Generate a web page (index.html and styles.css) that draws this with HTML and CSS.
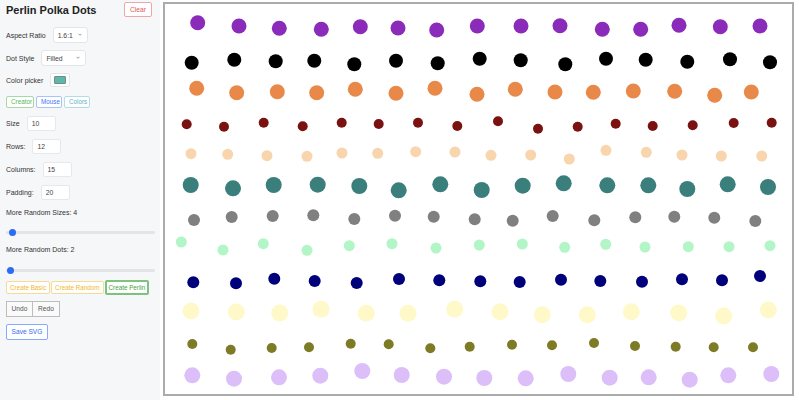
FILE: index.html
```html
<!DOCTYPE html>
<html>

<head>
    <title>Perlin Polka Dots</title>
    <meta charset="UTF-8" />
    <link rel="stylesheet" href="styles.css">
</head>

<body>
    <aside class="panel">
        <header class="panel-head">
            <h1>Perlin Polka Dots</h1>
            <button class="btn btn-red">Clear</button>
        </header>

        <div class="field field-aspect">
            <label for="aspect">Aspect Ratio</label>
            <span class="select select-short">
                <select id="aspect">
                    <option>1.6:1</option>
                    <option>1:1</option>
                </select>
                <svg class="chev" viewBox="0 0 8 5"><path d="M1 1l3 3 3-3" fill="none" stroke="#555" stroke-width="1.2" /></svg>
            </span>
        </div>

        <div class="field field-style">
            <label for="dot_style">Dot Style</label>
            <span class="select select-long">
                <select id="dot_style">
                    <option>Filled</option>
                    <option>Outline</option>
                </select>
                <svg class="chev" viewBox="0 0 8 5"><path d="M1 1l3 3 3-3" fill="none" stroke="#555" stroke-width="1.2" /></svg>
            </span>
        </div>

        <div class="field field-color">
            <label for="color">Color picker</label>
            <span class="swatch"><span class="swatch-fill"></span></span>
        </div>

        <div class="tabs">
            <button class="btn btn-green">Creator</button>
            <button class="btn btn-blue">Mouse</button>
            <button class="btn btn-cyan">Colors</button>
        </div>

        <div class="field field-num">
            <label for="size">Size</label>
            <input type="text" id="size" value="10" />
        </div>
        <div class="field field-num">
            <label for="rows">Rows:</label>
            <input type="text" id="rows" value="12" />
        </div>
        <div class="field field-num">
            <label for="columns">Columns:</label>
            <input type="text" id="columns" value="15" />
        </div>
        <div class="field field-num">
            <label for="padding">Padding:</label>
            <input type="text" id="padding" value="20" />
        </div>

        <div class="range-label range-label-first">More Random Sizes: 4</div>
        <input class="range range-sizes" type="range" min="0" max="200" value="4" />
        <div class="range-label">More Random Dots: 2</div>
        <input class="range range-dots" type="range" min="1" max="150" value="2" />

        <div class="actions">
            <button class="btn btn-yellow">Create Basic</button>
            <button class="btn btn-yellow">Create Random</button>
            <button class="btn btn-perlin">Create Perlin</button>
        </div>

        <div class="history">
            <button class="btn btn-gray">Undo</button>
            <button class="btn btn-gray">Redo</button>
        </div>

        <button class="btn btn-save">Save SVG</button>
    </aside>

    <main class="stage">
        <div class="canvas">
            <svg id="dots" viewBox="165 4 627 390" width="627" height="390"></svg>
        </div>
    </main>

    <script>
        const rows = [
            { fill: "#8a2cb9", r: 7.5, pts: [[197.7,22.7],[239,26],[279.3,28.3],[321.3,29.3],[360.3,26.7],[398,28],[436.7,30],[477.3,26],[521,26],[560,25.7],[602.3,29.3],[640.7,29.3],[679,25.3],[720.3,26.7],[760,26]] },
            { fill: "#000000", r: 7, pts: [[191.7,62.7],[234.3,59.7],[275.7,61.3],[314.3,60.7],[354.3,64.3],[396,60.7],[437.7,63.3],[479.7,58.7],[520.7,60.3],[565.3,64.3],[606,58.7],[645.7,59.7],[687.3,61.7],[730,59.3],[770,62.3]] },
            { fill: "#e8894a", r: 7.5, pts: [[196.7,88.3],[236.7,92.7],[277.3,91.7],[316.7,92.7],[355.3,89.3],[396,93.3],[435,88.3],[477,94.3],[515.3,89.3],[555,92],[593.3,92.3],[633.3,91],[674.7,91.3],[714.7,95.3],[751.3,92]] },
            { fill: "#7b1212", r: 5, pts: [[186.7,124.3],[224,126.7],[263.7,122.7],[302.7,126.3],[341.7,122.7],[378.7,124],[418,122.7],[457.3,126],[498,121.3],[538,128.7],[577.7,126.7],[615.7,123.7],[652.7,126],[692.7,125.3],[733.7,123],[771.7,122.7]] },
            { fill: "#f8d5ad", r: 5.5, pts: [[191,153.7],[227.7,154.3],[267,155.7],[307,156.3],[342,153],[377.7,153.3],[415.7,151.7],[455,152],[491,155.3],[530.7,155],[569.3,159],[606,150.3],[646.3,152.3],[682,155],[721.3,156],[761.7,156]] },
            { fill: "#3a7f7c", r: 8, pts: [[190.7,185],[233,188.3],[273.7,185],[317.7,184.7],[359.3,186],[398.7,190.3],[440.3,184.3],[481.7,190],[522.7,185.7],[563.7,183.3],[607.3,185.3],[648.3,185.3],[687.3,189],[727.7,184.3],[768,187]] },
            { fill: "#808080", r: 6, pts: [[194,220],[231.7,217],[272.7,216],[313.3,215.3],[354.3,219],[395,215.7],[433.7,216.7],[474.7,219.3],[512.7,220.7],[552.7,216],[594.3,220.3],[635.3,217.3],[674.3,216.7],[714.3,217.7],[755.3,221]] },
            { fill: "#b2f5c6", r: 5.5, pts: [[181.3,242],[223,250],[263.3,243.7],[307,250.3],[349.3,245.7],[392,243.7],[436,248],[479.3,245],[522.3,244],[564.7,247.3],[605.7,244.3],[645,247],[688.3,246.7],[729,246.7],[770,245.7]] },
            { fill: "#00007a", r: 6, pts: [[193.3,282.3],[236,283.3],[274.3,278.7],[314.7,281],[356.7,283],[399,279],[439.3,280.3],[480.3,281.3],[519.7,282],[561,279.7],[600.3,281],[642,281.7],[682,279.3],[722,280.3],[760,276]] },
            { fill: "#fff8c9", r: 8.5, pts: [[191,311],[236.3,312],[279.7,313],[321,309.3],[366.3,313.3],[408,313.3],[454.7,309.3],[500,311.7],[542.3,314.7],[587.3,314.7],[631.3,311.7],[678.7,313],[723.7,316],[768.3,310]] },
            { fill: "#7e7b26", r: 5, pts: [[192.3,344],[230.7,349.7],[271.7,348],[309,347.3],[350.7,343.7],[388.7,344.3],[430.3,348.3],[469.7,346.7],[512,344.7],[552,345.3],[594,343],[635,346],[675.7,346.7],[713.7,347.3],[753,347.3]] },
            { fill: "#dcbff8", r: 8, pts: [[192.3,375.3],[234,378.7],[279,377.3],[320.3,375.7],[362.3,371],[401.7,375],[444,376.7],[484.3,378],[525.7,378.3],[568.3,374],[609.7,377.7],[648.7,377.3],[689.7,379.7],[728.3,375.3],[771.3,374]] }
        ];

        const svg = document.getElementById("dots");
        const ns = "http://www.w3.org/2000/svg";
        rows.forEach(row => {
            row.pts.forEach(p => {
                const c = document.createElementNS(ns, "circle");
                c.setAttribute("cx", p[0]);
                c.setAttribute("cy", p[1]);
                c.setAttribute("r", row.r);
                c.setAttribute("fill", row.fill);
                svg.appendChild(c);
            });
        });
    </script>
</body>

</html>
```

FILE: styles.css
```css
body {
    font-family: "Liberation Sans", Arial, sans-serif;
    margin: 0;
    padding: 0;
    display: flex;
    height: 400px;
    overflow: hidden;
    background-color: white;
    color: #333;
}

.panel {
    width: 160px;
    box-sizing: border-box;
    padding: 2px 8px 0 6px;
    background-color: #f6f7f9;
    display: flex;
    flex-direction: column;
    align-items: flex-start;
    font-size: 7px;
}

.panel-head {
    width: 100%;
    height: 15px;
    display: flex;
    justify-content: space-between;
    align-items: center;
}

h1 {
    margin: 0;
    font-size: 11px;
    font-weight: bold;
    color: #222;
}

.btn {
    font-family: inherit;
    font-size: 6.3px;
    background-color: white;
    border: 1px solid #ccc;
    border-radius: 2px;
    padding: 0 4px;
    height: 12px;
    line-height: 10px;
    white-space: nowrap;
    cursor: pointer;
}

.btn-red {
    height: 15px;
    width: 28px;
    padding: 0;
    font-size: 6.7px;
    color: #e05858;
    border-color: #eaa8a8;
}

.field {
    display: flex;
    align-items: center;
    gap: 7px;
    margin-top: 8px;
}

.field label {
    color: #333;
}

.field-aspect {
    margin-top: 10px;
}

.field-style,
.field-color {
    margin-top: 7px;
}

.select {
    position: relative;
    display: inline-flex;
}

.select select {
    appearance: none;
    -webkit-appearance: none;
    font-family: inherit;
    font-size: 6.8px;
    color: #444;
    height: 16px;
    padding: 0 0 0 4px;
    border: 1px solid #e3e5e9;
    border-radius: 3px;
    background-color: white;
    outline: none;
}

.select-short select {
    width: 35px;
}

.select-long select {
    width: 45px;
}

.chev {
    position: absolute;
    right: 6px;
    top: 6px;
    width: 4px;
    height: 3px;
}

.swatch {
    width: 20px;
    height: 14px;
    box-sizing: border-box;
    border: 1px solid #e3e5e9;
    border-radius: 2px;
    background-color: white;
    padding: 2px 3px;
    display: flex;
}

.swatch-fill {
    flex: 1;
    background-color: #5cb8a8;
    border: 1px solid #6f8f8a;
    border-radius: 1px;
}

.tabs {
    display: flex;
    gap: 2px;
    margin-top: 9px;
}

.btn-green {
    color: #56b856;
    border-color: #a8d8a8;
    width: 28px;
}

.btn-blue {
    color: #3f74f5;
    border-color: #aac2fb;
    width: 26px;
}

.btn-cyan {
    color: #5fb3c6;
    border-color: #b2dde6;
    width: 26px;
}

.field-num input {
    width: 29px;
    height: 15px;
    box-sizing: border-box;
    padding: 0 0 0 4px;
    font-family: inherit;
    font-size: 6.8px;
    color: #444;
    border: 1px solid #e6e8ec;
    border-radius: 2px;
    background-color: white;
    outline: none;
}

.range-label {
    margin-top: 9px;
    line-height: 10px;
    color: #333;
}

.range-label-first {
    margin-top: 8px;
}

.range {
    -webkit-appearance: none;
    appearance: none;
    width: 149px;
    height: 8px;
    margin: 10px 0 0 0;
    background: transparent;
}

.range-dots {
    margin-top: 11px;
}

.range::-webkit-slider-runnable-track {
    height: 3px;
    border-radius: 2px;
    background-color: #e2e4e8;
}

.range::-webkit-slider-thumb {
    -webkit-appearance: none;
    width: 7px;
    height: 7px;
    margin-top: -2px;
    border-radius: 50%;
    background-color: #2b6cf2;
    border: none;
}

.actions {
    display: flex;
    align-items: center;
    gap: 1px;
    margin-top: 6px;
    height: 15px;
}

.btn-yellow {
    color: #f2b82a;
    border-color: #f6dc92;
    height: 13px;
    padding: 0 3px;
}

.btn-perlin {
    color: #43a243;
    border: 2px solid #7cc47c;
    height: 15px;
    padding: 0 2px;
}

.history {
    display: flex;
    margin-top: 6px;
}

.btn-gray {
    color: #555;
    background-color: #fafafa;
    border-color: #bdbdbd;
    height: 16px;
    width: 27px;
    padding: 0;
    font-size: 6.6px;
    border-radius: 0;
}

.btn-gray + .btn-gray {
    border-left: none;
}

.btn-save {
    margin-top: 7px;
    height: 16px;
    width: 42px;
    padding: 0;
    font-size: 6.6px;
    color: #2f6bf4;
    border-color: #86aafc;
}

.stage {
    flex: 1;
    padding: 2px 0 0 3px;
}

.canvas {
    width: 631px;
    height: 394px;
    box-sizing: border-box;
    border: 2px solid #ababab;
    background-color: white;
}

.canvas svg {
    display: block;
}
```
